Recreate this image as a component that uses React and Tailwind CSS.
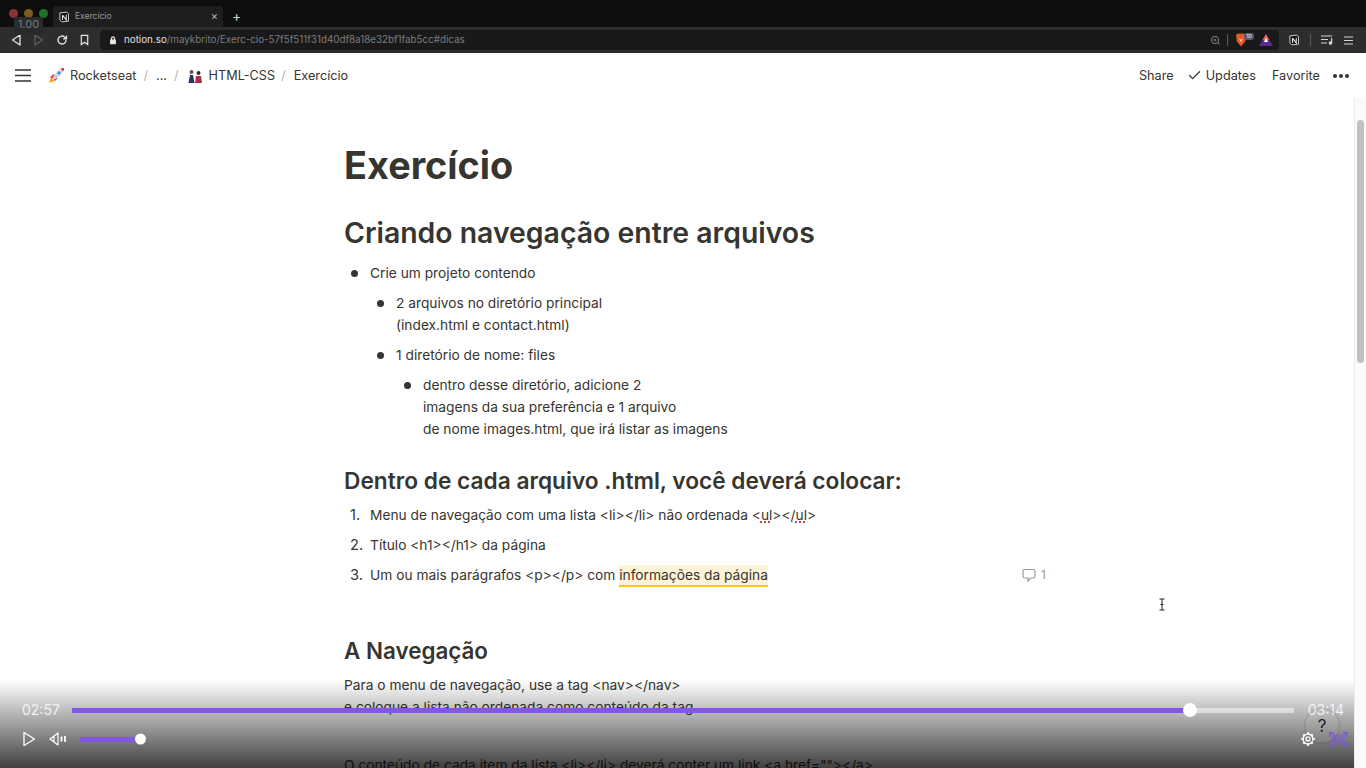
import { Check } from 'lucide-react'

function NotionMark({ size = 11, dark = false }) {
  return (
    <svg width={size} height={size} viewBox="0 0 16 16" fill="none">
      <path d="M2.5 2.5 11.5 1.5 14 3.5V13.5L5 14.5 2.5 12Z" fill={dark ? '#111' : '#e8e8e8'} stroke={dark ? '#ddd' : '#222'} strokeWidth="1.2" />
      <path d="M6 5.5V12M6 5.5 11 12V5" stroke={dark ? '#eee' : '#222'} strokeWidth="1.4" />
    </svg>
  )
}

function Rocket() {
  return (
    <svg width="17" height="17" viewBox="0 0 17 17">
      <path d="M1 16 3 11 6 14Z" fill="#f59e0b" />
      <path d="M2 10 6 7 7 9 4 12Z" fill="#ef4444" />
      <path d="M7 14 10 11 8 10 5 13Z" fill="#ef4444" />
      <path d="M5 11C7 6 11 2 16 1 15 6 11 10 6.5 12.5Z" fill="#cbd5e1" />
      <path d="M12.5 1.5 16 1 15.5 4.5Z" fill="#dc2626" />
      <circle cx="11" cy="6" r="1.4" fill="#3b82f6" />
    </svg>
  )
}

function People() {
  return (
    <svg width="16" height="16" viewBox="0 0 16 16">
      <circle cx="4.5" cy="4" r="2" fill="#7c4a3a" />
      <path d="M1.5 15 3 7H6L7.5 15Z" fill="#27345f" />
      <circle cx="11.5" cy="5" r="2" fill="#3b2a25" />
      <path d="M8 15 9 8H14L15 15Z" fill="#a8324a" />
    </svg>
  )
}

function BrowserBar() {
  return (
    <div className="h-[53px] shrink-0 flex flex-col bg-[#0e0e0e]">
      <div className="relative h-[27px] flex items-end pl-[53px]">
        <div className="absolute left-[9px] top-[9px] flex gap-[6px]">
          <span className="w-[9px] h-[9px] rounded-full bg-[#8a3236]" />
          <span className="w-[9px] h-[9px] rounded-full bg-[#7d5a1e]" />
          <span className="w-[9px] h-[9px] rounded-full bg-[#236f2c]" />
        </div>
        <div className="absolute left-[14px] top-[17px] w-[29px] h-[18px] bg-[#2a2a2a] text-[#6f7a86] text-[11px] leading-[15px] text-center z-10">1.00</div>
        <div className="w-[170px] h-[21px] bg-[#1e1e1e] rounded-t flex items-center pl-[5px] pr-[5px] text-[8.5px] text-[#9a9a9a]">
          <NotionMark size={12} dark />
          <span className="ml-[5px] flex-1">Exercício</span>
          <span className="text-[#bbbbbb] text-[11px]">×</span>
        </div>
        <span className="ml-[9px] mb-[1px] text-[#cfcfcf] text-[14px] leading-[20px]">+</span>
      </div>
      <div className="h-[26px] bg-[#2d2d2d] flex items-center pl-[11px] pr-[13px]">
        <svg width="10" height="12" viewBox="0 0 10 12" fill="none" stroke="#e5e5e5" strokeWidth="1.3"><path d="M9 1v10L1.5 6Z" strokeLinejoin="round" /></svg>
        <svg className="ml-[13px]" width="10" height="12" viewBox="0 0 10 12" fill="none" stroke="#5e5e5e" strokeWidth="1.3"><path d="M1 1v10L8.5 6Z" strokeLinejoin="round" /></svg>
        <svg className="ml-[12px]" width="12" height="12" viewBox="0 0 24 24" fill="none" stroke="#e5e5e5" strokeWidth="2.6">
          <path d="M20 12a8 8 0 1 1-2.5-5.8L21 9.5M21 3v6.5h-6.5" />
        </svg>
        <svg className="ml-[11px]" width="11" height="12" viewBox="0 0 24 24" fill="none" stroke="#e5e5e5" strokeWidth="2.6">
          <path d="M5 2h14v20l-7-5-7 5Z" />
        </svg>
        <div className="ml-[10px] flex-1 h-[20px] bg-[#191919] rounded-[4px] flex items-center pl-[8px] pr-[6px] text-[9.8px]">
          <svg width="10" height="10" viewBox="0 0 24 24" fill="#e5e5e5"><path d="M7 11V8a5 5 0 0 1 10 0v3h2v11H5V11Zm3 0h4V8a2 2 0 0 0-4 0Z" /></svg>
          <span className="ml-[6px] text-[#e0e0e0]">notion.so</span>
          <span className="text-[#7c7c7c]">/maykbrito/Exerc-cio-57f5f511f31d40df8a18e32bf1fab5cc#dicas</span>
          <svg className="ml-auto" width="11" height="11" viewBox="0 0 24 24" fill="none" stroke="#8c8c8c" strokeWidth="2">
            <circle cx="11" cy="11" r="8" /><path d="m21 21-4.5-4.5M8 11h6M11 8v6" />
          </svg>
          <span className="ml-[6px] w-px h-[12px] bg-[#5c5c5c]" />
          <span className="relative ml-[7px] w-[17px] h-[14px]">
            <svg width="12" height="14" viewBox="0 0 12 14"><path d="M1 1.5 4 .5h4l3 1-.8 7L6 13.5 1.8 8.5Z" fill="#e8572a" /><path d="M4 5 6 7l2-2-2 4Z" fill="#fff" /></svg>
            <span className="absolute left-[9px] top-0 w-[10px] h-[7px] rounded-[3px] bg-[#5b5b66] text-[5px] leading-[7px] text-center text-white">10</span>
          </span>
          <svg className="ml-[7px]" width="14" height="12" viewBox="0 0 14 12">
            <path d="M7 0 14 12H0Z" fill="#5a2a8c" /><path d="M7 0 10.5 6H3.5Z" fill="#f15a4a" /><path d="M7 3.5 9 8H5Z" fill="#fff" />
          </svg>
        </div>
        <span className="ml-[9px]"><NotionMark size={12} dark /></span>
        <span className="ml-[10px] w-px h-[12px] bg-[#5c5c5c]" />
        <svg className="ml-[10px]" width="12" height="10" viewBox="0 0 12 10" fill="none" stroke="#d5d5d5" strokeWidth="1.2">
          <path d="M0 1h11M0 4.5h7M0 8h6" /><circle cx="9.5" cy="8" r="1.2" fill="#d5d5d5" /><path d="M10.6 8V3" />
        </svg>
        <svg className="ml-[11px]" width="9" height="9" viewBox="0 0 9 9" stroke="#d5d5d5" strokeWidth="1.2"><path d="M0 1h9M0 4.5h9M0 8h9" /></svg>
      </div>
    </div>
  )
}

function PageHeader() {
  return (
    <div className="h-[44px] shrink-0 flex items-center pt-[1px] pl-[15px] pr-[17px] text-[12.7px] text-[#37352f]">
      <svg width="16" height="13" viewBox="0 0 16 13" stroke="#37352f" strokeWidth="1.4"><path d="M0 1h16M0 6.5h16M0 12h16" /></svg>
      <span className="ml-[17px] flex items-center"><Rocket /></span>
      <span className="ml-[5px]">Rocketseat</span>
      <span className="ml-[7px] text-[#b5b3ae]">/</span>
      <span className="ml-[8px]">...</span>
      <span className="ml-[7px] text-[#b5b3ae]">/</span>
      <span className="ml-[8px] flex items-center"><People /></span>
      <span className="ml-[6px]">HTML-CSS</span>
      <span className="ml-[6px] text-[#b5b3ae]">/</span>
      <span className="ml-[8px]">Exercício</span>
      <span className="ml-auto">Share</span>
      <Check size={15} className="ml-[13px]" strokeWidth={2} />
      <span className="ml-[4px]">Updates</span>
      <span className="ml-[16px] mr-[-1px]">Favorite</span>
      <span className="ml-[14px] flex gap-[2px]">
        <span className="w-[4px] h-[4px] rounded-full bg-[#37352f]" />
        <span className="w-[4px] h-[4px] rounded-full bg-[#37352f]" />
        <span className="w-[4px] h-[4px] rounded-full bg-[#37352f]" />
      </span>
    </div>
  )
}

function Bullet({ children, className = '' }) {
  return (
    <div className={`flex ${className}`}>
      <span className="w-[26px] shrink-0 pl-[7px] pt-[8px]"><span className="block w-[7px] h-[7px] rounded-full bg-[#37352f]" /></span>
      <div>{children}</div>
    </div>
  )
}

function Numbered({ n, children, className = '' }) {
  return (
    <div className={`relative flex ${className}`}>
      <span className="w-[26px] shrink-0 pl-[6px] text-[14.6px]">{n}.</span>
      <div>{children}</div>
    </div>
  )
}

function PageContent() {
  return (
    <div className="flex-1 min-h-0 flex">
      <div className="flex-1 pl-[344px] pt-[44px] text-[13.75px] leading-[22px] text-[#37352f] overflow-hidden">
        <h1 className="text-[37.8px] leading-[48px] font-bold">Exercício</h1>
        <h2 className="mt-[24px] text-[28.4px] leading-[40px] font-semibold">Criando navegação entre arquivos</h2>
        <div className="mt-[9px]">
          <Bullet>Crie um projeto contendo</Bullet>
          <div className="ml-[26px]">
            <Bullet className="mt-[8px]">2 arquivos no diretório principal<br />(index.html e contact.html)</Bullet>
            <Bullet className="mt-[8px]">1 diretório de nome: files</Bullet>
            <div className="ml-[27px]">
              <Bullet className="mt-[8px]">dentro desse diretório, adicione 2<br />imagens da sua preferência e 1 arquivo<br />de nome images.html, que irá listar as imagens</Bullet>
            </div>
          </div>
        </div>
        <h3 className="mt-[25px] text-[22.7px] leading-[32px] font-semibold">Dentro de cada arquivo .html, você deverá colocar:</h3>
        <div className="mt-[7px]">
          <Numbered n={1}>Menu de navegação com uma lista &lt;li&gt;&lt;/li&gt; não ordenada &lt;<span className="underline decoration-dotted decoration-[#e03e3e] decoration-2">ul</span>&gt;&lt;/<span className="underline decoration-dotted decoration-[#e03e3e] decoration-2">ul</span>&gt;</Numbered>
          <Numbered n={2} className="mt-[8px]">Título &lt;h1&gt;&lt;/h1&gt; da página</Numbered>
          <Numbered n={3} className="mt-[8px]">
            <span>Um ou mais parágrafos &lt;p&gt;&lt;/p&gt; com </span>
            <span className="bg-[#fdf3d8] border-b-2 border-[#fbc91d] pt-[2px] pb-[2px]">informações da página</span>
            <span className="absolute left-[678px] top-0 flex items-center text-[12px] text-[#9b9a97]">
              <svg width="14" height="14" viewBox="0 0 14 14" fill="none" stroke="#9b9a97" strokeWidth="1.2"><path d="M2.5 1.5h9a1.5 1.5 0 0 1 1.5 1.5v5.5A1.5 1.5 0 0 1 11.5 10H8.5L6 13V10H2.5A1.5 1.5 0 0 1 1 8.5V3a1.5 1.5 0 0 1 1.5-1.5Z" /></svg>
              <span className="ml-[5px]">1</span>
            </span>
          </Numbered>
        </div>
        <h3 className="mt-[49px] text-[22.4px] leading-[32px] font-semibold">A Navegação</h3>
        <p className="mt-[7px]">Para o menu de navegação, use a tag &lt;nav&gt;&lt;/nav&gt;<br />e coloque a lista não ordenada como conteúdo da tag</p>
        <p className="mt-[36px]">O conteúdo de cada item da lista &lt;li&gt;&lt;/li&gt; deverá conter um link &lt;a href=""&gt;&lt;/a&gt;</p>
      </div>
      <div className="w-[12px] shrink-0 bg-[#fafafa] border-l border-[#ececec] pt-[23px] px-[2px]">
        <div className="h-[243px] rounded-full bg-[#c1c1c1]" />
      </div>
    </div>
  )
}

function Player() {
  return (
    <div className="absolute left-0 right-[12px] bottom-0 h-[88px] bg-gradient-to-b from-black/0 to-black/75 text-white">
      <div className="h-[46px] pt-[14px] flex items-center pl-[22px] pr-[10px]">
        <span className="w-[50px] text-[14px] leading-[22px] text-[#f2f2f2]">02:57</span>
        <div className="flex-1 h-[5px] bg-white/50 relative">
          <div className="h-full w-[91.5%] bg-[#8257e5]" />
          <span className="absolute left-[91.5%] top-1/2 -translate-x-1/2 -translate-y-1/2 w-[14px] h-[14px] rounded-full bg-white" />
        </div>
        <span className="w-[50px] text-right text-[14px] leading-[22px] text-[#f2f2f2]">03:14</span>
      </div>
      <div className="relative flex items-center pl-[22px] mt-[5px]">
        <svg width="14" height="16" viewBox="0 0 14 16" fill="none" stroke="white" strokeWidth="1.3"><path d="M2 1.5v13L12.5 8Z" strokeLinejoin="round" /></svg>
        <svg className="ml-[13px]" width="18" height="16" viewBox="0 0 18 16" fill="none" stroke="white" strokeWidth="1.2"><path d="M1 8 9 2v12ZM5 5v6" strokeLinejoin="round" /><path d="M12.5 5.5v5M16 5v6" strokeWidth="1.8" /></svg>
        <div className="ml-[12px] w-[62px] h-[5px] bg-[#8257e5] rounded-l relative">
          <span className="absolute right-[-5px] top-1/2 -translate-y-1/2 w-[11px] h-[11px] rounded-full bg-white" />
        </div>
        <svg className="absolute left-[1300px] top-[0px]" width="16" height="16" viewBox="0 0 24 24" fill="none" stroke="white" strokeWidth="2">
          <circle cx="12" cy="12" r="3" />
          <path d="M12 2v3M12 19v3M2 12h3M19 12h3M5 5l2 2M17 17l2 2M19 5l-2 2M7 17l-2 2" strokeWidth="3" />
          <circle cx="12" cy="12" r="7.5" />
        </svg>
        <span className="absolute left-[1304px] top-[-23px] w-[36px] h-[36px] rounded-full border border-black/15 bg-white/5 text-[#222] text-[17px] leading-[34px] text-center">?</span>
        <svg className="absolute left-[1329px] top-[1px]" width="19" height="15" viewBox="0 0 19 15" fill="none" stroke="#7a52dc" strokeWidth="1.5">
          <rect x="3" y="2" width="13" height="11" fill="#7a52dc" fillOpacity="0.45" stroke="none" />
          <path d="M1 5V1h4M14 1h4v4M18 10v4h-4M5 14H1v-4" />
        </svg>
      </div>
    </div>
  )
}

export default function App() {
  return (
    <div className="relative h-screen w-full overflow-hidden bg-white flex flex-col font-['Inter',sans-serif]">
      <BrowserBar />
      <PageHeader />
      <PageContent />
      <svg className="absolute left-[1157px] top-[598px]" width="10" height="13" viewBox="0 0 10 13" fill="none" stroke="#222" strokeWidth="1">
        <path d="M2.5 1h5M2.5 12h5M5 1v11M3.5 6.5h3" />
      </svg>
      <Player />
    </div>
  )
}
